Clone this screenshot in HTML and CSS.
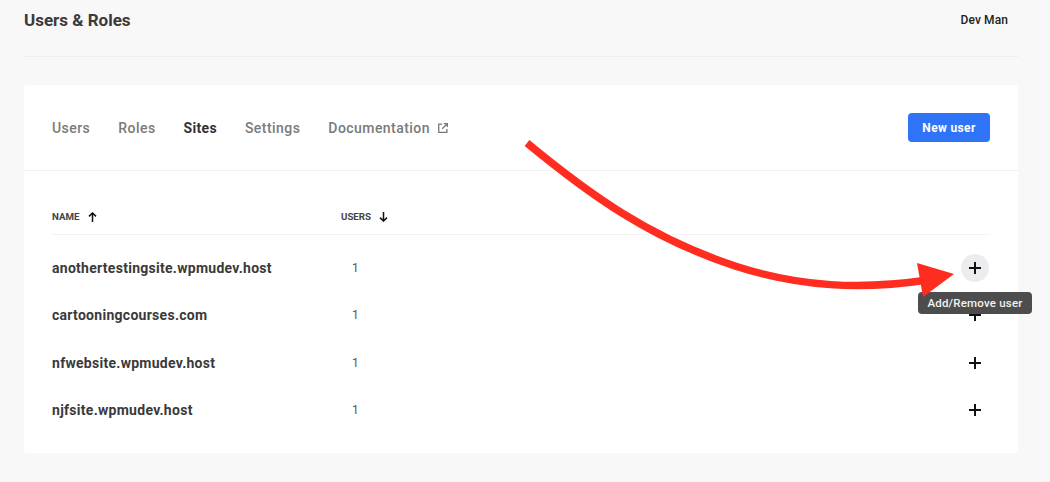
FILE: index.html
```html
<!DOCTYPE html>
<html lang="en">
<head>
<meta charset="utf-8">
<title>Users &amp; Roles</title>
<link rel="stylesheet" href="styles.css">
</head>
<body>
<div class="page">
  <header class="top">
    <h1 class="title">Users &amp; Roles</h1>
    <span class="account">Dev Man</span>
  </header>
  <section class="card">
    <div class="card-head">
      <nav class="tabs">
        <a class="tab">Users</a>
        <a class="tab">Roles</a>
        <a class="tab active">Sites</a>
        <a class="tab">Settings</a>
        <a class="tab doc">Documentation
          <svg class="ext" width="10" height="10" viewBox="0 0 11 11" fill="none" stroke="#777" stroke-width="1.4"><path d="M4.5 1.2H.8v9h9V6.5"/><path d="M6.5.7h3.8v3.8M10.2.8 4.6 6.4"/></svg>
        </a>
      </nav>
      <button class="primary">New user</button>
    </div>
    <div class="table">
      <div class="row head-row">
        <div class="col-name">NAME
          <svg class="sort" width="9" height="10" viewBox="0 0 9 10" fill="none" stroke="#111" stroke-width="1.5"><path d="M4.5 10V1M1 4.4 4.5 1 8 4.4"/></svg>
        </div>
        <div class="col-users">USERS
          <svg class="sort" width="9" height="10" viewBox="0 0 9 10" fill="none" stroke="#111" stroke-width="1.5"><path d="M4.5 0v9M1 5.6 4.5 9 8 5.6"/></svg>
        </div>
      </div>
      <div class="rows">
        <div class="row site">
          <div class="col-name">anothertestingsite.wpmudev.host</div>
          <div class="col-users count">1</div>
          <div class="action">
            <button class="add hover"><svg width="12" height="12" viewBox="0 0 12 12" stroke="#111" stroke-width="2"><path d="M6 0v12M0 6h12"/></svg></button>
            <div class="tooltip">Add/Remove user</div>
          </div>
        </div>
        <div class="row site">
          <div class="col-name">cartooningcourses.com</div>
          <div class="col-users count">1</div>
          <div class="action"><button class="add"><svg width="12" height="12" viewBox="0 0 12 12" stroke="#111" stroke-width="2"><path d="M6 0v12M0 6h12"/></svg></button></div>
        </div>
        <div class="row site">
          <div class="col-name">nfwebsite.wpmudev.host</div>
          <div class="col-users count">1</div>
          <div class="action"><button class="add"><svg width="12" height="12" viewBox="0 0 12 12" stroke="#111" stroke-width="2"><path d="M6 0v12M0 6h12"/></svg></button></div>
        </div>
        <div class="row site">
          <div class="col-name">njfsite.wpmudev.host</div>
          <div class="col-users count">1</div>
          <div class="action"><button class="add"><svg width="12" height="12" viewBox="0 0 12 12" stroke="#111" stroke-width="2"><path d="M6 0v12M0 6h12"/></svg></button></div>
        </div>
      </div>
    </div>
  </section>
</div>
<svg class="arrow" width="1050" height="482" viewBox="0 0 1050 482" fill="none">
  <path d="M527 143C590 195 650 238 735 266C800 287 860 290 928 280" stroke="#ff2d1f" stroke-width="7.5"/>
  <path d="M917 263 954 274 923 297Z" fill="#ff2d1f"/>
</svg>
</body>
</html>
```
FILE: styles.css
```css
* { box-sizing: border-box; }
html, body { margin: 0; height: 100%; }
body {
  background: #f8f8f8;
  font-family: Roboto, "Liberation Sans", sans-serif;
  color: #333;
  overflow: hidden;
}
.page { padding: 0 32px 0 24px; }
.top {
  height: 57px;
  display: flex;
  justify-content: space-between;
  padding: 10px 10px 0 0;
  border-bottom: 1px solid #eee;
}
.title { margin: 0; font-size: 17px; line-height: 21px; font-weight: 700; color: #3a3a3a; }
.account { font-size: 12px; line-height: 20px; font-weight: 500; letter-spacing: .1px; color: #222; }
.card {
  margin-top: 28px;
  height: 368px;
  background: #fff;
  border-radius: 4px;
}
.card-head {
  height: 86px;
  padding: 0 28px;
  display: flex;
  align-items: center;
  justify-content: space-between;
  border-bottom: 1px solid #f1f1f1;
}
.tabs { display: flex; gap: 28px; }
.tab { font-size: 14px; line-height: 20px; font-weight: 500; letter-spacing: .45px; color: #7a7a7a; }
.tab.active { color: #333; font-weight: 700; letter-spacing: .3px; }
.doc { display: flex; align-items: center; gap: 9px; }
.ext { margin-top: 1px; margin-left: -1px; }
.primary {
  width: 82px;
  height: 29px;
  border: 0;
  border-radius: 4px;
  background: #2f74f6;
  color: #fff;
  font: 700 12px Roboto, "Liberation Sans", sans-serif;
  letter-spacing: .35px;
}
.table { padding: 0 28px; }
.row { display: flex; align-items: center; }
.head-row {
  height: 64px;
  padding-top: 28px;
  border-bottom: 1px solid #f3f3f3;
  font-size: 9.7px;
  font-weight: 700;
  color: #444;
}
.head-row .col-name, .head-row .col-users { display: flex; align-items: center; gap: 8.5px; line-height: 12px; }
.rows { padding-top: 9.5px; }
.site { height: 47.33px; font-size: 14px; font-weight: 700; color: #3a3a3a; letter-spacing: .28px; }
.col-name { width: 289px; }
.col-users { flex: 1; }
.count { padding-left: 11px; font-size: 12px; font-weight: 400; color: #555; }
.action { position: relative; margin-right: 1px; }
.add {
  display: flex;
  align-items: center;
  justify-content: center;
  width: 28px;
  height: 28px;
  padding: 0;
  border: 0;
  border-radius: 50%;
  background: transparent;
}
.add.hover { background: #ececee; }
.tooltip {
  position: absolute;
  top: 38px;
  left: -43px;
  width: 114px;
  height: 22px;
  border-radius: 4px;
  background: #4d4d4d;
  color: #f2f2f2;
  font-size: 11.5px;
  font-weight: 500;
  line-height: 22px;
  text-align: center;
  letter-spacing: .2px;
  z-index: 2;
}
.arrow { position: absolute; top: 0; left: 0; z-index: 3; pointer-events: none; }
```
